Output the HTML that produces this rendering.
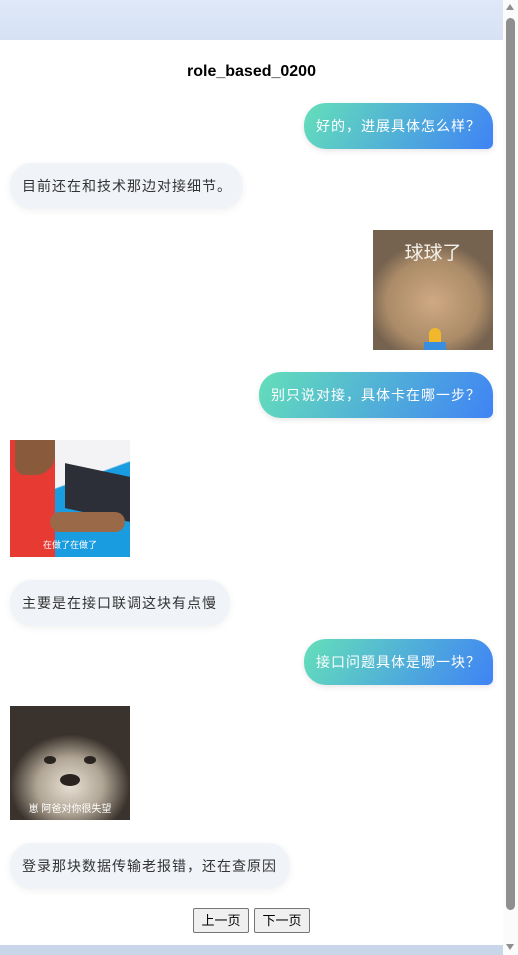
<!DOCTYPE html>
<html><head><meta charset="utf-8"><style>
*{margin:0;padding:0;box-sizing:border-box}
html,body{width:518px;height:955px;overflow:hidden;background:#fff;font-family:"Liberation Sans","Noto Sans CJK SC",sans-serif}
.top{position:absolute;left:0;top:0;width:503px;height:40px;background:linear-gradient(#dfe8f8,#d6e2f4)}
.bot{position:absolute;left:0;top:945px;width:503px;height:10px;background:#c9d6ea}
.sb{position:absolute;left:503px;top:0;width:15px;height:955px;background:#fbfbfb}
.thumb{position:absolute;left:506px;top:18px;width:9px;height:892px;border-radius:5px;background:#8f8f8f}
.au{position:absolute;left:506px;top:4px;width:0;height:0;border-left:4.5px solid transparent;border-right:4.5px solid transparent;border-bottom:6px solid #8f8f8f}
.ad{position:absolute;left:506px;top:944px;width:0;height:0;border-left:4.5px solid transparent;border-right:4.5px solid transparent;border-top:6px solid #8f8f8f}
h1{position:absolute;top:63px;left:0;width:503px;text-align:center;font-size:16px;font-weight:bold;color:#000}
.b{position:absolute;height:46px;line-height:46px;font-size:14px;letter-spacing:1px;padding:0 12px;border-radius:22px;white-space:nowrap}
.r{background:linear-gradient(120deg,#64dfb9,#3f83f5);color:#fff;border-bottom-right-radius:6px;box-shadow:0 2px 6px rgba(0,0,0,.1)}
.l{background:#f0f3f8;color:#333;box-shadow:0 2px 8px rgba(0,0,0,.06)}
.img{position:absolute;width:120px;overflow:hidden}
.cap{position:absolute;left:0;width:100%;text-align:center;color:#fff}
.btn{position:absolute;top:908px;height:25px;width:56px;border:1px solid #767676;border-radius:2px;background:#efefef;font-size:13px;line-height:23px;text-align:center;color:#000}
</style></head><body>
<div class="top"></div><div class="bot"></div>
<div class="sb"></div><div class="thumb"></div><div class="au"></div><div class="ad"></div>
<h1>role_based_0200</h1>
<div class="b r" style="left:304px;top:103px;width:189px">好的，进展具体怎么样？</div>
<div class="b l" style="left:10px;top:163px;width:233px">目前还在和技术那边对接细节。</div>
<div class="img" style="left:373px;top:230px;height:120px;background:radial-gradient(ellipse 55% 50% at 50% 60%,#cfa983,#ab8b68 70%,#75624f)">
 <div class="cap" style="top:8px;font-size:19px;color:#f4f0ea">球球了</div>
 <div style="position:absolute;left:56px;top:98px;width:12px;height:22px;background:#f2b82c;border-radius:6px 6px 2px 2px"></div>
 <div style="position:absolute;left:51px;top:112px;width:22px;height:8px;background:#3a8ee0"></div>
</div>
<div class="b r" style="left:259px;top:372px;width:234px">别只说对接，具体卡在哪一步？</div>
<div class="img" style="left:10px;top:440px;height:117px;background:linear-gradient(160deg,#f3f3f5 40%,#1a9ce0 41%)">
 <div style="position:absolute;left:0;top:0;width:45px;height:117px;background:#e63a32"></div>
 <div style="position:absolute;left:5px;top:0;width:40px;height:35px;background:#8a5a3c;border-radius:0 0 20px 10px"></div>
 <div style="position:absolute;left:55px;top:30px;width:65px;height:45px;background:#2c2f38;transform:skewY(12deg)"></div>
 <div style="position:absolute;left:40px;top:72px;width:75px;height:20px;background:#9a6a48;border-radius:10px"></div>
 <div class="cap" style="top:98px;font-size:9px">在做了在做了</div>
</div>
<div class="b l" style="left:10px;top:580px;width:220px">主要是在接口联调这块有点慢</div>
<div class="b r" style="left:304px;top:639px;width:189px">接口问题具体是哪一块？</div>
<div class="img" style="left:10px;top:706px;height:114px;background:radial-gradient(ellipse 50% 45% at 50% 70%,#e8e0d5,#b0a595 55%,#3a322c)">
 <div style="position:absolute;left:34px;top:50px;width:12px;height:8px;background:#2a2420;border-radius:50%"></div>
 <div style="position:absolute;left:74px;top:50px;width:12px;height:8px;background:#2a2420;border-radius:50%"></div>
 <div style="position:absolute;left:50px;top:68px;width:20px;height:12px;background:#2a2420;border-radius:50%"></div>
 <div class="cap" style="top:94px;font-size:10px">崽 阿爸对你很失望</div>
</div>
<div class="b l" style="left:10px;top:843px;width:280px">登录那块数据传输老报错，还在查原因</div>
<div class="btn" style="left:193px">上一页</div>
<div class="btn" style="left:254px">下一页</div>
</body></html>
